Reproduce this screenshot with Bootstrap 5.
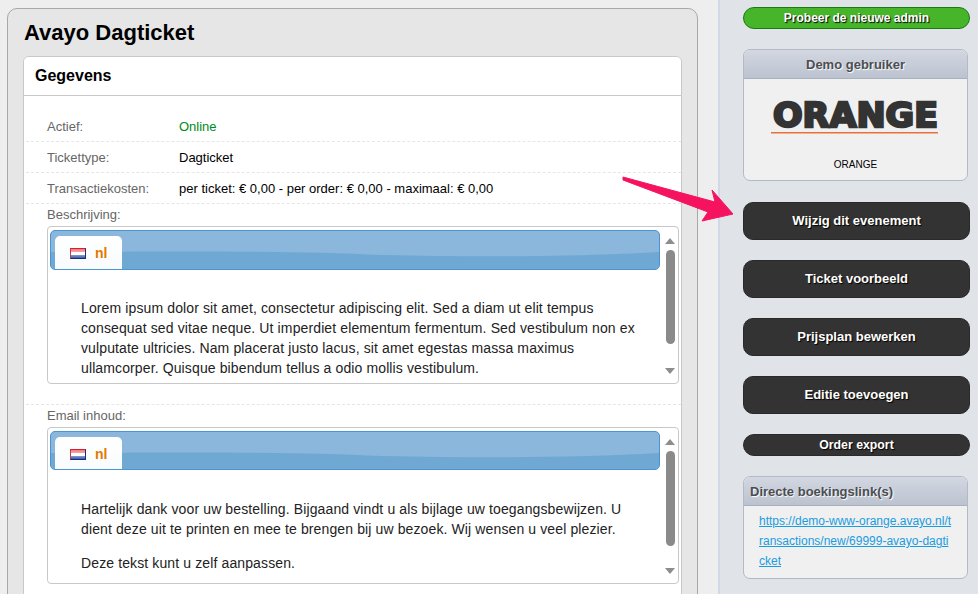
<!DOCTYPE html>
<html lang="nl">
<head>
    <meta charset="UTF-8">
    <meta name="viewport" content="width=device-width, initial-scale=1.0">
    <title>Avayo Dagticket</title>
    <link rel="stylesheet" href="https://cdn.jsdelivr.net/npm/bootstrap@5.3.0/dist/css/bootstrap.min.css">
    <style>
        html, body {
            height: 594px;
            overflow: hidden;
        }
        body {
            font-family: "Liberation Sans", Arial, sans-serif;
            background-color: #eee;
            color: #000;
            font-size: 13px;
        }
        .page-wrap {
            height: 594px;
            overflow: hidden;
            position: relative;
        }
        .main-col {
            width: 718px;
            flex: none;
            padding: 8px 20px 0 7px;
        }
        .main-panel {
            background-color: #e6e6e6;
            border: 1px solid #a8a8a8;
            border-radius: 10px;
            padding: 0 15px;
            height: 700px;
        }
        .main-panel h1 {
            font-size: 22px;
            font-weight: 700;
            line-height: 25px;
            margin: 11px 0 11px 1px;
        }
        .info-card {
            border: 1px solid #c8c8c8;
            border-radius: 6px;
            background: #fff;
            height: 600px;
        }
        .info-card .card-header {
            background: #fff;
            font-size: 16px;
            font-weight: 700;
            line-height: 20px;
            padding: 9px 11px 9px;
            border-bottom: 1px solid #c8c8c8;
            height: 39px;
        }
        .info-body {
            padding: 15px 0 0 2px;
        }
        .info-row {
            height: 31px;
            line-height: 31px;
            border-bottom: 1px dashed #e6e6e6;
            padding-left: 21px;
            color: #666;
        }
        .info-row .lbl {
            width: 132px;
            flex: none;
            font-size: 13px;
        }
        .info-row .val {
            color: #000;
            font-size: 13px;
        }
        .info-row .val.online {
            color: #008a20;
        }
        .info-block {
            padding: 3px 0 0 21px;
        }
        .info-block .lbl {
            font-size: 13px;
            color: #666;
            line-height: 15px;
            height: 19px;
        }
        .block-sep {
            border-bottom: 1px dashed #e6e6e6;
            height: 21px;
        }
        .lang-box {
            width: 632px;
            border: 1px solid #c8c8c8;
            border-radius: 4px;
            background: #fff;
            overflow: hidden;
            padding: 3px 0 0 2px;
        }
        .box-one { height: 158px; }
        .box-two { height: 157px; }
        .box-main {
            width: 610px;
            flex: none;
        }
        .lang-bar {
            position: relative;
            height: 40px;
            border: 1px solid #4b93d1;
            border-radius: 5px;
            background: #8ab7db;
            overflow: hidden;
            padding: 5px 0 0 4px;
        }
        .box-two .lang-bar {
            height: 39px;
        }
        .bar-wave {
            position: absolute;
            left: 0;
            top: 0;
        }
        .lang-tab {
            position: relative;
            width: 67px;
            height: 35px;
            background: linear-gradient(#fff, #f8fbfc);
            border-radius: 5px 5px 0 0;
            padding-left: 15px;
            gap: 9px;
            color: #e07b00;
            font-size: 14px;
            font-weight: 700;
        }
        .flag-nl {
            width: 16px;
            height: 11px;
            flex: none;
            border: 1px solid;
            border-color: #d8202a #1a2a80 #1a2a80 #c0404a;
            background: linear-gradient(#f47a80 0, #f9a0a4 30%, #fff 34%, #fff 66%, #8a9cd0 67%, #3a5aa8 100%);
        }
        .lang-text {
            padding: 28px 18px 0 31px;
            font-size: 14px;
            line-height: 20px;
            letter-spacing: .12px;
            color: #222;
        }
        .box-two .lang-text {
            padding-top: 29px;
        }
        .lang-text p {
            margin-bottom: 14px;
        }
        .fake-scroll {
            width: 16px;
            margin-left: 2px;
            flex: none;
            padding-top: 8px;
            align-items: center;
        }
        .scroll-up {
            width: 0;
            height: 0;
            border-left: 5px solid transparent;
            border-right: 5px solid transparent;
            border-bottom: 6px solid #8d8d8d;
        }
        .scroll-down {
            width: 0;
            height: 0;
            border-left: 5px solid transparent;
            border-right: 5px solid transparent;
            border-top: 6px solid #8d8d8d;
        }
        .scroll-thumb {
            width: 9px;
            background: #8a8a8a;
            border-radius: 5px;
            margin: 6px 0 24px;
        }
        .box-one .scroll-thumb { height: 94px; }
        .box-two .scroll-thumb { height: 95px; margin-bottom: 22px; }
        .side-col {
            flex: 1;
            background: #e0e3e8;
            border-left: 2px solid #d2d8e6;
            padding: 7px 8px 0 23px;
        }
        .side-btn {
            display: block;
            width: 227px;
            height: 38px;
            line-height: 36px;
            background: #333;
            border: 1px solid #2a2a2a;
            border-radius: 10px;
            color: #fff;
            font-size: 13px;
            font-weight: 700;
            text-align: center;
            text-decoration: none;
            padding: 0;
            margin-bottom: 20px;
            text-shadow: 1px 1px 1px #000;
        }
        .side-btn:hover {
            background: #333;
            color: #fff;
        }
        .side-btn.slim {
            height: 22px;
            line-height: 20px;
            border-radius: 11px;
            font-size: 12.3px;
        }
        .side-btn.try-new {
            background: #46b52a;
            border-color: #1c7a14;
            font-size: 12px;
        }
        .side-box {
            width: 225px;
            border: 1px solid #b4b9c4;
            border-radius: 7px;
            background: #f0f0f0;
            overflow: hidden;
        }
        .side-box .box-head {
            height: 29px;
            line-height: 29px;
            background: linear-gradient(#d2d7e1, #bcc3d0);
            border-bottom: 1px solid #aab0bc;
            color: #4d4d4d;
            font-weight: 700;
            font-size: 13px;
            padding: 0 6px;
            text-shadow: 1px 1px 1px #fff;
        }
        .user-box {
            height: 132px;
            margin-bottom: 21px;
        }
        .user-box svg {
            display: block;
            margin: 12px auto 0;
        }
        .user-box .user-name {
            font-size: 10px;
            line-height: 14px;
            text-align: center;
            margin-top: 23px;
        }
        .links-box {
            height: 103px;
        }
        .links-box .box-link {
            display: block;
            padding: 0 15px;
            font-size: 12px;
            line-height: 20px;
            color: #1a9ce0;
            word-break: break-all;
            margin-top: 5px;
        }
        .arrow-over {
            position: absolute;
            left: 610px;
            top: 165px;
        }
    </style>
</head>
<body>
    <div class="page-wrap d-flex">
        <div class="main-col">
            <div class="main-panel">
                <h1>Avayo Dagticket</h1>
                <div class="card info-card">
                    <div class="card-header">Gegevens</div>
                    <div class="info-body">
                        <div class="info-row d-flex"><span class="lbl">Actief:</span><span class="val online">Online</span></div>
                        <div class="info-row d-flex"><span class="lbl">Tickettype:</span><span class="val">Dagticket</span></div>
                        <div class="info-row d-flex"><span class="lbl">Transactiekosten:</span><span class="val">per ticket: € 0,00 - per order: € 0,00 - maximaal: € 0,00</span></div>

                        <div class="info-block">
                            <div class="lbl">Beschrijving:</div>
                            <div class="lang-box box-one d-flex">
                                <div class="box-main">
                                    <div class="lang-bar">
                                        <svg class="bar-wave" width="610" height="40" viewBox="0 0 610 40">
                                            <path d="M0 21 C150 20 250 20 330 24 C430 26 530 26 610 21 V40 H0 Z" fill="#6fa8d3"/>
                                        </svg>
                                        <div class="lang-tab d-flex align-items-center"><span class="flag-nl"></span>nl</div>
                                    </div>
                                    <div class="lang-text">
                                        <p>Lorem ipsum dolor sit amet, consectetur adipiscing elit. Sed a diam ut elit tempus consequat sed vitae neque. Ut imperdiet elementum fermentum. Sed vestibulum non ex vulputate ultricies. Nam placerat justo lacus, sit amet egestas massa maximus ullamcorper. Quisque bibendum tellus a odio mollis vestibulum.</p>
                                    </div>
                                </div>
                                <div class="fake-scroll d-flex flex-column">
                                    <div class="scroll-up"></div>
                                    <div class="scroll-thumb"></div>
                                    <div class="scroll-down"></div>
                                </div>
                            </div>
                        </div>
                        <div class="block-sep"></div>

                        <div class="info-block">
                            <div class="lbl">Email inhoud:</div>
                            <div class="lang-box box-two d-flex">
                                <div class="box-main">
                                    <div class="lang-bar">
                                        <svg class="bar-wave" width="610" height="40" viewBox="0 0 610 40">
                                            <path d="M0 21 C150 20 250 20 330 24 C430 26 530 26 610 21 V40 H0 Z" fill="#6fa8d3"/>
                                        </svg>
                                        <div class="lang-tab d-flex align-items-center"><span class="flag-nl"></span>nl</div>
                                    </div>
                                    <div class="lang-text">
                                        <p>Hartelijk dank voor uw bestelling. Bijgaand vindt u als bijlage uw toegangsbewijzen. U dient deze uit te printen en mee te brengen bij uw bezoek. Wij wensen u veel plezier.</p>
                                        <p>Deze tekst kunt u zelf aanpassen.</p>
                                    </div>
                                </div>
                                <div class="fake-scroll d-flex flex-column">
                                    <div class="scroll-up"></div>
                                    <div class="scroll-thumb"></div>
                                    <div class="scroll-down"></div>
                                </div>
                            </div>
                        </div>
                    </div>
                </div>
            </div>
        </div>

        <div class="side-col">
            <a href="#" class="side-btn slim try-new">Probeer de nieuwe admin</a>
            <div class="side-box user-box">
                <div class="box-head text-center">Demo gebruiker</div>
                <svg width="170" height="44" viewBox="0 0 170 44">
                    <text x="2" y="36" font-family="'DejaVu Sans', sans-serif" font-weight="700" font-size="34" fill="#333" stroke="#333" stroke-width="2.5" textLength="165" lengthAdjust="spacingAndGlyphs">ORANGE</text>
                    <rect x="0" y="41" width="167" height="1.5" fill="#e8703a"/>
                </svg>
                <div class="user-name">ORANGE</div>
            </div>
            <a href="#" class="side-btn">Wijzig dit evenement</a>
            <a href="#" class="side-btn">Ticket voorbeeld</a>
            <a href="#" class="side-btn">Prijsplan bewerken</a>
            <a href="#" class="side-btn">Editie toevoegen</a>
            <a href="#" class="side-btn slim">Order export</a>
            <div class="side-box links-box">
                <div class="box-head">Directe boekingslink(s)</div>
                <a href="#" class="box-link">https://demo-www-orange.avayo.nl/transactions/new/69999-avayo-dagticket</a>
            </div>
        </div>

        <svg class="arrow-over" width="130" height="65" viewBox="0 0 130 65">
            <polygon points="13,12 105,37 102,25 123,49 92,56 98,47 13,15" fill="#f5135f" stroke="#f5135f" stroke-width="1" stroke-linejoin="round"/>
        </svg>
    </div>
    <script src="https://cdn.jsdelivr.net/npm/bootstrap@5.3.0/dist/js/bootstrap.bundle.min.js"></script>
</body>
</html>
